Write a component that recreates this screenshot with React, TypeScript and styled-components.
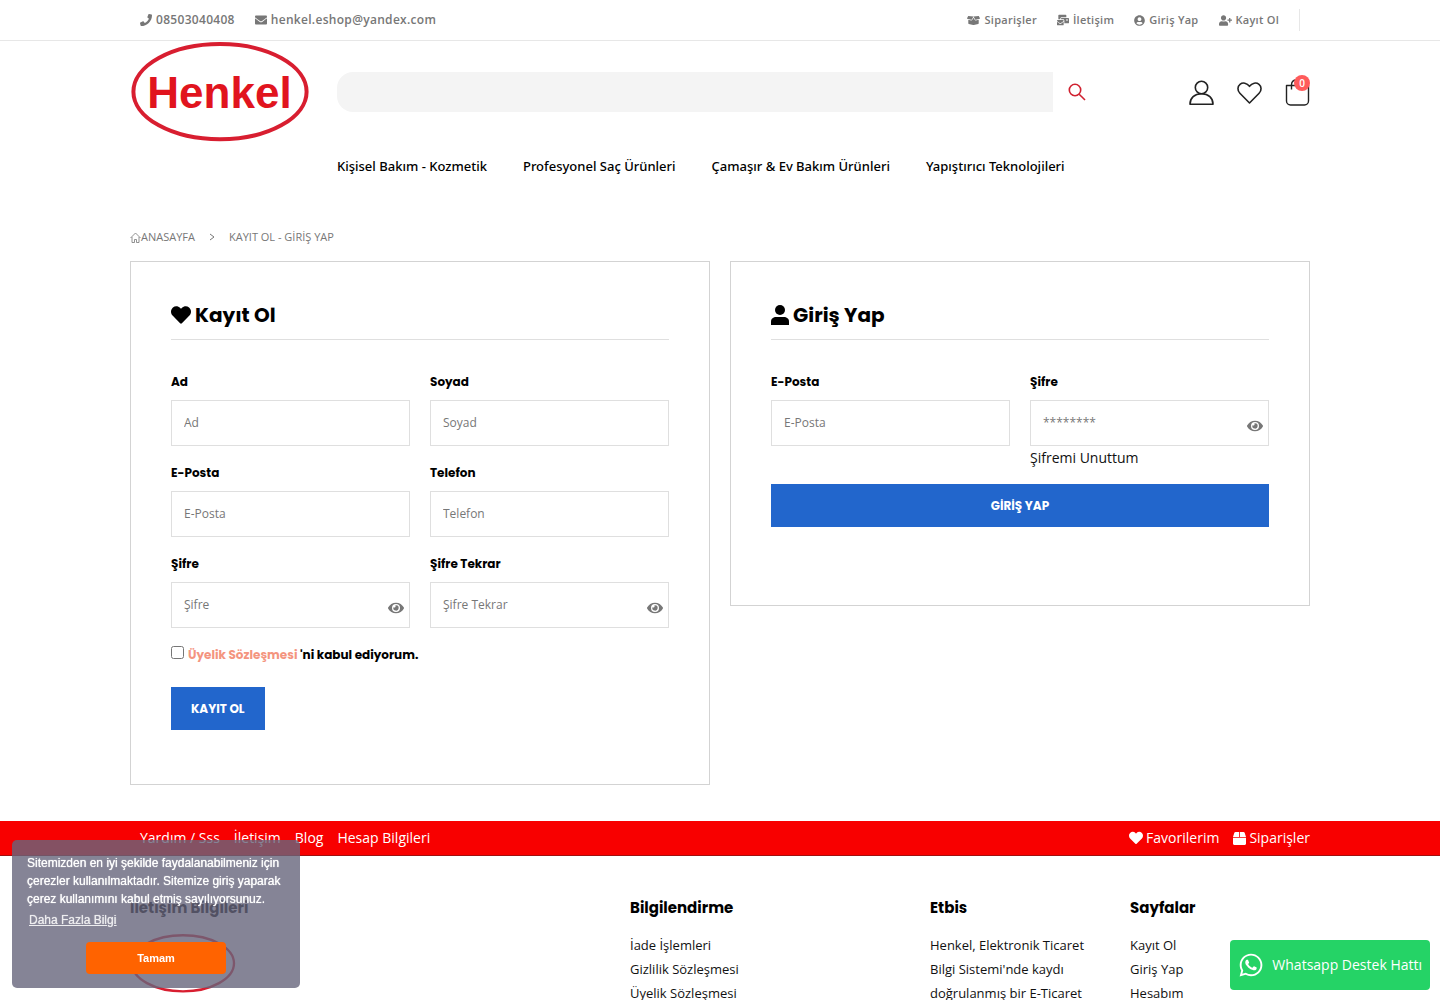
import React from "react";
import styled, { createGlobalStyle } from "styled-components";
import {
  FaPhone, FaEnvelope, FaBoxOpen, FaMailBulk, FaUserCircle, FaUserPlus,
  FaHeart, FaEye, FaBox, FaWhatsapp,
} from "react-icons/fa";

const body = `"Open Sans", "Noto Sans", sans-serif`;
const display = `Poppins, Inter, sans-serif`;

const Global = createGlobalStyle`
  *, *::before, *::after { box-sizing: border-box; }
  body { margin: 0; background: #fff; color: #111; font: 400 14px/24px ${body}; }
  a { color: inherit; text-decoration: none; }
  ul { list-style: none; margin: 0; padding: 0; }
  h2, h3, p { margin: 0; }
  h2, h3, label { color: #000; }
`;

const Container = styled.div`
  width: 100%;
  max-width: 1220px;
  margin: 0 auto;
  padding: 0 20px;
`;

const TopBar = styled.div`
  border-bottom: 1px solid #e7e7e7;
  color: #777;
  font-size: 12px;
  font-weight: 600;
`;

const TopInner = styled(Container)`
  display: flex;
  justify-content: space-between;
  align-items: center;
  height: 40px;
`;

const TopList = styled.ul<{ $small?: boolean }>`
  display: flex;
  align-items: center;
  gap: 20px;
  padding: 0 10px;
  font-size: ${(p) => (p.$small ? 11 : 12)}px;
  letter-spacing: 0.025em;
  a { display: flex; align-items: center; gap: 4px; }
`;

const TopEnd = styled.div`
  display: flex;
  align-items: center;
  gap: 10px;
  padding-right: 10px;
  &::after { content: ""; width: 1px; height: 22px; background: #e7e7e7; }
`;

const HeaderMain = styled(Container)`
  display: flex;
  align-items: center;
  height: 102px;
`;

const LogoLink = styled.a`
  display: block;
  width: 180px;
  height: 100px;
  margin-right: 27px;
  svg { display: block; }
`;

const Search = styled.form`
  flex: 1;
  display: flex;
  align-items: center;
  margin-right: 87px;
`;

const SearchInput = styled.input`
  flex: 1;
  min-width: 0;
  height: 40px;
  border: 0;
  border-radius: 16px 0 0 16px;
  background: #f4f4f4;
  padding: 0 20px;
  font: 400 13px/20px ${body};
`;

const IconButton = styled.button`
  display: grid;
  place-items: center;
  width: 48px;
  height: 40px;
  padding: 0;
  border: 0;
  background: none;
  color: #d0202f;
`;

const HeaderIcons = styled.div`
  display: flex;
  gap: 22px;
  padding-top: 2px;
  a { position: relative; display: grid; place-items: center; width: 26px; height: 30px; }
`;

const Badge = styled.span`
  position: absolute;
  top: -3px;
  right: 0;
  width: 16px;
  height: 16px;
  border-radius: 50%;
  background: #ff5b5b;
  color: #fff;
  font-size: 10px;
  line-height: 16px;
  font-weight: 600;
  text-align: center;
`;

const Nav = styled.nav`
  padding: 11px 0 0 207px;
  color: #000;
  font: 500 13px/24px "Noto Sans", "Open Sans", sans-serif;
  ul { display: flex; flex-wrap: wrap; gap: 36px; }
`;

const Crumbs = styled.nav`
  display: flex;
  align-items: center;
  gap: 13px;
  margin-top: 47px;
  height: 24px;
  color: #777;
  font-size: 11px;
  a { display: flex; align-items: center; }
`;

const Panels = styled.main`
  display: grid;
  grid-template-columns: repeat(auto-fit, minmax(360px, 1fr));
  align-items: start;
  gap: 20px;
  margin: 12px 0 36px;
`;

const Panel = styled.section<{ $end: number }>`
  border: 1px solid #d3d3d3;
  padding: 40px 40px ${(p) => p.$end}px;
`;

const PanelTitle = styled.h2`
  display: flex;
  align-items: center;
  gap: 4px;
  padding-bottom: 11px;
  border-bottom: 1px solid #dfdfdf;
  margin-bottom: 30px;
  font: 700 20px/26px ${display};
`;

const Fields = styled.div`
  display: grid;
  grid-template-columns: 1fr 1fr;
  gap: 15px 20px;
`;

const FieldBox = styled.div`
  display: flex;
  flex-direction: column;
  label { font: 700 12px/24px ${display}; margin-bottom: 6px; }
`;

const InputWrap = styled.div`
  position: relative;
  color: #777;
`;

const Input = styled.input`
  display: block;
  width: 100%;
  height: 46px;
  border: 1px solid #dfdfdf;
  border-radius: 0;
  padding: 0 12px 2px;
  background: #fff;
  font: 400 12px/20px ${body};
  &::placeholder { color: #777; opacity: 1; }
`;

const Reveal = styled.button`
  position: absolute;
  right: 6px;
  bottom: 12px;
  display: grid;
  padding: 0;
  border: 0;
  background: none;
  color: #777;
`;

const Consent = styled.div`
  display: flex;
  align-items: center;
  gap: 4px;
  margin: 15px 0 20px;
  font: 700 12px/24px ${display};
  input { width: 13px; height: 13px; margin: 0 0 5px; }
  a { color: #f4957f; }
`;

const Button = styled.button<{ $wide?: boolean }>`
  display: block;
  width: ${(p) => (p.$wide ? "100%" : "auto")};
  height: 43px;
  padding: 0 20px;
  border: 0;
  background: #2266cc;
  color: #fff;
  font: 700 12px/20px ${display};
`;

const LoginActions = styled.div`
  margin-top: 14px;
`;

const RedBar = styled.div`
  background: #f80000;
  border-bottom: 1px solid #a01010;
  color: #fff;
  font-size: 14px;
`;

const RedInner = styled(Container)`
  display: flex;
  justify-content: space-between;
  align-items: center;
  height: 34px;
  ul { display: flex; gap: 14px; }
  ul:first-child { padding-left: 10px; }
  a { display: flex; align-items: center; gap: 3px; }
`;

const FooterGrid = styled(Container).attrs({ as: "footer" })`
  display: grid;
  grid-template-columns: 5fr 3fr 2fr 1.8fr;
  padding-top: 40px;
  font-size: 13px;
  h3 { font: 700 15px/24px ${display}; margin-bottom: 13px; }
`;

const SmallLogo = styled.div`
  margin-top: 14px;
  svg { display: block; }
`;

const EtbisText = styled.p`
  max-width: 170px;
`;

const Cookie = styled.aside`
  position: fixed;
  left: 12px;
  bottom: 12px;
  width: 288px;
  height: 148px;
  border-radius: 5px;
  padding: 14px 15px;
  background: rgba(103, 101, 124, 0.8);
  color: #fff;
  font: 400 12px/18px "Liberation Sans", Arial, sans-serif;
  text-shadow: 0 0 1px #fff;
  a { display: inline-block; padding: 3px 2px 1px; opacity: 0.85; text-decoration: underline; line-height: 18px; }
`;

const CookieButton = styled.button`
  display: block;
  width: 140px;
  height: 32px;
  margin: 12px auto 0;
  border: 0;
  border-radius: 4px;
  background: #ff6300;
  color: #fff;
  font: 700 11px/18px "Liberation Sans", Arial, sans-serif;
`;

const Whatsapp = styled.a`
  position: fixed;
  right: 10px;
  bottom: 10px;
  display: flex;
  align-items: center;
  gap: 8px;
  height: 50px;
  padding: 0 8px;
  border-radius: 4px;
  background: #25d366;
  color: #fff;
  white-space: nowrap;
`;

function HenkelLogo({ width, height }: { width: number; height: number }) {
  return (
    <svg width={width} height={height} viewBox="0 0 180 100" role="img" aria-label="Henkel">
      <ellipse cx="90" cy="49.7" rx="86.6" ry="47.6" fill="#fff" stroke="#d81e30" strokeWidth="4" />
      <text x="89.5" y="65.5" textAnchor="middle" fontFamily="Liberation Sans, Arial, sans-serif" fontWeight="700" fontSize="44" fill="#e1141e">Henkel</text>
    </svg>
  );
}

function PersonIcon() {
  return (
    <svg width="18" height="20" viewBox="0 0 18 20" fill="currentColor" aria-hidden="true">
      <circle cx="9" cy="5" r="5" />
      <path d="M0 20v-3.500C0 13.500 2.500 12 5 12h8c2.500 0 5 1.500 5 4.500V20z" />
    </svg>
  );
}

function Field({ id, label, type = "text", placeholder, children }: {
  id: string; label: string; type?: string; placeholder?: string; children?: React.ReactNode;
}) {
  return (
    <FieldBox>
      <label htmlFor={id}>{label}</label>
      <InputWrap>
        <Input id={id} type={type} placeholder={placeholder ?? label} />
        {type === "password" && <Reveal type="button" aria-label={label}><FaEye size={16} /></Reveal>}
      </InputWrap>
      {children}
    </FieldBox>
  );
}

export default function App() {
  return (
    <>
      <Global />
      <header>
        <TopBar>
          <TopInner>
            <TopList>
              <li><a href="#phone"><FaPhone />08503040408</a></li>
              <li><a href="#mail"><FaEnvelope />henkel.eshop@yandex.com</a></li>
            </TopList>
            <TopEnd>
              <TopList $small>
                <li><a href="#orders"><FaBoxOpen size={13} />Siparişler</a></li>
                <li><a href="#contact"><FaMailBulk size={12} />İletişim</a></li>
                <li><a href="#login"><FaUserCircle />Giriş Yap</a></li>
                <li><a href="#register"><FaUserPlus size={13} />Kayıt Ol</a></li>
              </TopList>
            </TopEnd>
          </TopInner>
        </TopBar>
        <HeaderMain>
          <LogoLink href="#home"><HenkelLogo width={180} height={100} /></LogoLink>
          <Search>
            <SearchInput type="search" aria-label="Search" />
            <IconButton type="button" aria-label="Search">
              <svg width="18" height="18" viewBox="0 0 18 18" fill="none" stroke="currentColor" strokeWidth="1.6">
                <circle cx="7" cy="7" r="5.7" /><path d="M11.2 11.2 17 17" />
              </svg>
            </IconButton>
          </Search>
          <HeaderIcons>
            <a href="#account" aria-label="Account">
              <svg width="26" height="26" viewBox="0 0 26 26" fill="none" stroke="#222" strokeWidth="1.6">
                <circle cx="13.500" cy="7.500" r="6.200" />
                <path d="M2 24.200C2 18 6.500 13.700 13.500 13.700S25 18 25 24.200z" strokeLinejoin="round" />
              </svg>
            </a>
            <a href="#favorites" aria-label="Favorites">
              <svg width="26" height="26" viewBox="0 0 26 26" fill="none" stroke="#222" strokeWidth="1.6" strokeLinejoin="round">
                <path d="M13.500 23 3.900 13.300C1.100 10.400 1.500 6.300 4 4.300c2.800-2.200 6.900-1.500 9.500 2 2.600-3.500 6.700-4.200 9.500-2 2.500 2 2.900 6.100.1 9z" />
              </svg>
            </a>
            <a href="#cart" aria-label="Cart">
              <svg width="26" height="30" viewBox="0 0 26 30" fill="none" stroke="#222" strokeWidth="1.4">
                <path d="M2.500 7.500h22V23a4 4 0 0 1-4 4h-14a4 4 0 0 1-4-4z" strokeLinejoin="round" /><path d="M7.500 11.500V7c0-3 2-5 5-5" />
              </svg>
              <Badge>0</Badge>
            </a>
          </HeaderIcons>
        </HeaderMain>
        <Container>
          <Nav>
            <ul>
              <li><a href="#care">Kişisel Bakım - Kozmetik</a></li>
              <li><a href="#hair">Profesyonel Saç Ürünleri</a></li>
              <li><a href="#laundry">Çamaşır &amp; Ev Bakım Ürünleri</a></li>
              <li><a href="#adhesive">Yapıştırıcı Teknolojileri</a></li>
            </ul>
          </Nav>
        </Container>
      </header>
      <Container>
        <Crumbs>
          <a href="#home">
            <svg width="11" height="11" viewBox="0 0 11 11" fill="none" stroke="currentColor" strokeWidth="0.8">
              <path d="M.5 6 5.500 1l5 5M2 5v5.500h2.500v-3h2v3H9V5" />
            </svg>
            ANASAYFA
          </a>
          <svg width="8" height="8" viewBox="0 0 8 8" fill="none" stroke="currentColor"><path d="M2 1l4 3-4 3" /></svg>
          <span>KAYIT OL - GİRİŞ YAP</span>
        </Crumbs>
        <Panels>
          <Panel $end={54}>
            <PanelTitle><FaHeart />Kayıt Ol</PanelTitle>
            <form>
              <Fields>
                <Field id="ad" label="Ad" />
                <Field id="soyad" label="Soyad" />
                <Field id="eposta" label="E-Posta" type="email" />
                <Field id="telefon" label="Telefon" type="tel" />
                <Field id="sifre" label="Şifre" type="password" />
                <Field id="tekrar" label="Şifre Tekrar" type="password" />
              </Fields>
              <Consent>
                <input id="kabul" type="checkbox" />
                <label htmlFor="kabul"><a href="#terms">Üyelik Sözleşmesi</a> 'ni kabul ediyorum.</label>
              </Consent>
              <Button type="button">KAYIT OL</Button>
            </form>
          </Panel>
          <Panel $end={78}>
            <PanelTitle><PersonIcon />Giriş Yap</PanelTitle>
            <form>
              <Fields>
                <Field id="giris-eposta" label="E-Posta" type="email" />
                <Field id="giris-sifre" label="Şifre" type="password" placeholder="********">
                  <a href="#forgot">Şifremi Unuttum</a>
                </Field>
              </Fields>
              <LoginActions><Button type="button" $wide>GİRİŞ YAP</Button></LoginActions>
            </form>
          </Panel>
        </Panels>
      </Container>
      <RedBar>
        <RedInner>
          <ul>
            <li><a href="#faq">Yardım / Sss</a></li>
            <li><a href="#contact">İletişim</a></li>
            <li><a href="#blog">Blog</a></li>
            <li><a href="#info">Hesap Bilgileri</a></li>
          </ul>
          <ul>
            <li><a href="#favorites"><FaHeart />Favorilerim</a></li>
            <li><a href="#orders"><FaBox size={13} />Siparişler</a></li>
          </ul>
        </RedInner>
      </RedBar>
      <FooterGrid>
        <div>
          <h3>İletişim Bilgileri</h3>
          <SmallLogo><HenkelLogo width={106} height={59} /></SmallLogo>
        </div>
        <div>
          <h3>Bilgilendirme</h3>
          <ul>
            <li><a href="#returns">İade İşlemleri</a></li>
            <li><a href="#privacy">Gizlilik Sözleşmesi</a></li>
            <li><a href="#terms">Üyelik Sözleşmesi</a></li>
          </ul>
        </div>
        <div>
          <h3>Etbis</h3>
          <EtbisText>Henkel, Elektronik Ticaret Bilgi Sistemi'nde kaydı doğrulanmış bir E-Ticaret</EtbisText>
        </div>
        <div>
          <h3>Sayfalar</h3>
          <ul>
            <li><a href="#register">Kayıt Ol</a></li>
            <li><a href="#login">Giriş Yap</a></li>
            <li><a href="#account">Hesabım</a></li>
          </ul>
        </div>
      </FooterGrid>
      <Cookie>
        <p>Sitemizden en iyi şekilde faydalanabilmeniz için çerezler kullanılmaktadır. Sitemize giriş yaparak çerez kullanımını kabul etmiş sayılıyorsunuz.</p>
        <a href="#more">Daha Fazla Bilgi</a>
        <CookieButton type="button">Tamam</CookieButton>
      </Cookie>
      <Whatsapp href="#whatsapp"><FaWhatsapp size={26} />Whatsapp Destek Hattı</Whatsapp>
    </>
  );
}
